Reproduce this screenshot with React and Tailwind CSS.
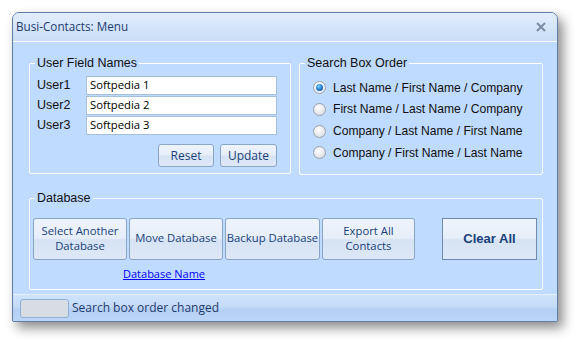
import React from "react";

const btn =
  "border border-[#8aa5c8] rounded-[3px] bg-[linear-gradient(to_bottom,#eef4fc_0%,#e6eef9_48%,#d6e3f4_52%,#dde8f6_100%)] text-[#1b3f7a] flex items-center justify-center text-center leading-[15px]";

function Radio({ checked, label }) {
  return (
    <div className="flex items-center h-[21.7px]">
      <div
        className={
          "w-[13px] h-[13px] rounded-full border border-[#9aa3ad] flex items-center justify-center ml-[13px] mr-[7px] " +
          (checked
            ? "bg-[radial-gradient(circle_at_40%_35%,#ffffff,#dfe4ea)]"
            : "bg-[radial-gradient(circle_at_40%_35%,#ffffff,#d2d6dc)]")
        }
      >
        {checked && (
          <div className="w-[7px] h-[7px] rounded-full bg-[radial-gradient(circle_at_40%_35%,#7fd0ff,#1a6fc2_60%,#0b3f86)]" />
        )}
      </div>
      <span className="text-[12.1px] text-[#111]">{label}</span>
    </div>
  );
}

function Group({ title, className, children }) {
  return (
    <div className={"relative border border-white rounded-[2px] " + className}>
      <span className="absolute left-[5px] -top-[9px] px-[2px] bg-[#bfdbff] text-[12.5px] leading-[16px] text-[#111]">
        {title}
      </span>
      {children}
    </div>
  );
}

export default function App() {
  return (
    <div
      className="w-[579px] h-[342px] bg-white pt-[12px] pl-[12px]"
      style={{ fontFamily: '"Liberation Sans", Arial, sans-serif' }}
    >
      <div className="w-[546px] h-[310px] border border-[#5f7ea8] rounded-t-[7px] rounded-b-[2px] shadow-[5px_6px_12px_rgba(0,0,0,0.45)] flex flex-col bg-[#bfdbff] overflow-hidden">
        {/* Title bar */}
        <div className="h-[29px] shrink-0 border-b border-white bg-[linear-gradient(to_bottom,#e3eefc_0%,#d6e6fa_45%,#c9ddf7_100%)] flex items-center justify-between pl-[3px] pr-[11px]">
          <span
            className="text-[11.7px] text-[#1e3a6e]"
            style={{ fontFamily: '"Open Sans", sans-serif' }}
          >
            Busi-Contacts: Menu
          </span>
          <svg width="10" height="10" viewBox="0 0 10 10">
            <path d="M1 1 L9 9 M9 1 L1 9" stroke="#7d8da3" strokeWidth="2" />
          </svg>
        </div>

        {/* Body */}
        <div className="flex-1 pl-[16px] pt-[21px]">
          <div className="flex gap-[8px]">
            <Group title="User Field Names" className="w-[262px] h-[111px] pt-[11px] pl-[7px] pr-[13px]">
              {["Softpedia 1", "Softpedia 2", "Softpedia 3"].map((v, i) => (
                <div key={i} className="flex items-center h-[20px]">
                  <span className="w-[49px] text-[12.5px] text-[#111]">User{i + 1}</span>
                  <div
                    className="w-[191px] h-[19px] bg-white border border-[#a6bfdc] pl-[3px] flex items-center text-[11.3px] text-black"
                    style={{ fontFamily: '"Open Sans", sans-serif' }}
                  >
                    {v}
                  </div>
                </div>
              ))}
              <div
                className="flex justify-end gap-[6px] mt-[9px] text-[12px]"
                style={{ fontFamily: '"Open Sans", sans-serif' }}
              >
                <div className={btn + " w-[56px] h-[23px]"}>Reset</div>
                <div className={btn + " w-[57px] h-[23px]"}>Update</div>
              </div>
            </Group>
            <Group title="Search Box Order" className="w-[244px] h-[112px] pt-[13px]">
              <Radio checked label="Last Name / First Name / Company" />
              <Radio label="First Name / Last Name / Company" />
              <Radio label="Company / Last Name / First Name" />
              <Radio label="Company / First Name / Last Name" />
            </Group>
          </div>

          <Group title="Database" className="w-[514px] h-[92px] mt-[23px] pt-[19px] pl-[3px]">
            <div
              className="flex items-center text-[11.3px]"
              style={{ fontFamily: '"Open Sans", sans-serif' }}
            >
              <div className="flex gap-[2px]">
                <div className={btn + " w-[94px] h-[42px] pb-[3px]"}>
                  Select Another<br />Database
                </div>
                <div className={btn + " w-[94px] h-[42px] pb-[3px]"}>Move Database</div>
                <div className={btn + " w-[95px] h-[42px] pb-[3px]"}>Backup Database</div>
                <div className={btn + " w-[93px] h-[42px] pb-[3px]"}>
                  Export All<br />Contacts
                </div>
              </div>
              <div
                className="ml-[27px] w-[95px] h-[42px] border border-[#6f89b0] bg-[linear-gradient(to_bottom,#eef4fc_0%,#e6eef9_48%,#d6e3f4_52%,#dde8f6_100%)] flex items-center justify-center text-[13px] font-bold text-[#1b3f7a]"
                style={{ fontFamily: '"Liberation Sans", Arial, sans-serif' }}
              >
                Clear All
              </div>
            </div>
            <div
              className="ml-[90px] mt-[7px] text-[11px] text-[#0000ff] underline leading-[14px]"
              style={{ fontFamily: '"Open Sans", sans-serif' }}
            >
              Database Name
            </div>
          </Group>
        </div>

        {/* Status bar */}
        <div className="h-[27px] shrink-0 border-t border-[#e6f0fc] bg-[linear-gradient(to_bottom,#cfe3fb_0%,#c4dbf8_45%,#b4d0f4_55%,#bcd6f6_100%)] flex items-center pl-[7px]">
          <div className="w-[49px] h-[19px] rounded-[3px] border border-[#8fb0da] bg-[#d8dde4]" />
          <span
            className="ml-[3px] text-[12px] text-[#1e3a6e]"
            style={{ fontFamily: '"Open Sans", sans-serif' }}
          >
            Search box order changed
          </span>
        </div>
      </div>
    </div>
  );
}
